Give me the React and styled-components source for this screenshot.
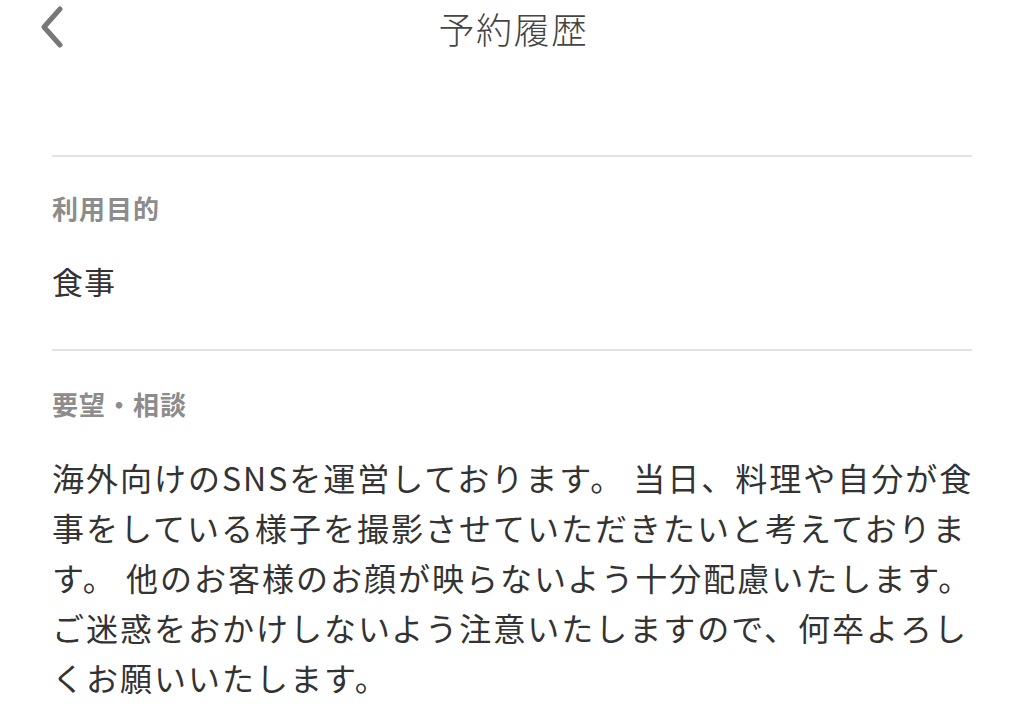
import React from "react";
import styled, { createGlobalStyle } from "styled-components";

const Global = createGlobalStyle`
  html, body { margin: 0; padding: 0; background: #fff; }
  body { font-family: "Noto Sans CJK JP", "Noto Sans", sans-serif; color: #333; }
`;

const Page = styled.div`
  width: 1024px;
  min-height: 721px;
  background: #fff;
  overflow: hidden;
`;

const Header = styled.header`
  position: relative;
  height: 56px;
  display: flex;
  align-items: center;
  justify-content: center;
`;

const BackButton = styled.button`
  position: absolute;
  left: 36px;
  top: 4px;
  width: 32px;
  height: 46px;
  padding: 0;
  border: 0;
  background: none;
  display: flex;
  align-items: center;
  justify-content: center;
`;

const Title = styled.h1`
  margin: 0;
  font-size: 36px;
  font-weight: 300;
  letter-spacing: 1.5px;
  line-height: 1;
  color: #444;
  padding-left: 3px;
`;

const List = styled.div`
  margin: 99px 52px 0;
`;

const Section = styled.section`
  border-top: 2px solid #e2e2e2;
  padding-top: ${(p) => p.$top}px;
  padding-bottom: ${(p) => p.$bottom}px;
`;

const Label = styled.div`
  font-size: 26px;
  font-weight: 700;
  letter-spacing: 1px;
  line-height: 26px;
  color: #8c8c8c;
`;

const Value = styled.div`
  margin-top: 44px;
  font-size: 31px;
  letter-spacing: 1px;
  line-height: 31px;
  color: #333;
`;

const Paragraph = styled.p`
  margin: 35px 0 0;
  font-size: 32px;
  letter-spacing: 2px;
  line-height: 50px;
  color: #333;
  white-space: nowrap;
`;

const Chevron = () => (
  <svg width="26" height="42" viewBox="0 0 26 42">
    <path
      d="M21 3 L5 21 L21 39"
      fill="none"
      stroke="#777"
      strokeWidth="5"
      strokeLinecap="round"
      strokeLinejoin="round"
    />
  </svg>
);

const lines = [
  "海外向けのSNSを運営しております。 当日、料理や自分が食",
  "事をしている様子を撮影させていただきたいと考えておりま",
  "す。 他のお客様のお顔が映らないよう十分配慮いたします。",
  "ご迷惑をおかけしないよう注意いたしますので、何卒よろし",
  "くお願いいたします。",
];

export default function App() {
  return (
    <Page>
      <Global />
      <Header>
        <BackButton aria-label="戻る">
          <Chevron />
        </BackButton>
        <Title>予約履歴</Title>
      </Header>
      <List>
        <Section $top={38} $bottom={53}>
          <Label>利用目的</Label>
          <Value>食事</Value>
        </Section>
        <Section $top={40} $bottom={20}>
          <Label>要望・相談</Label>
          <Paragraph>
            {lines.map((l, i) => (
              <React.Fragment key={i}>
                {l}
                {i < lines.length - 1 && <br />}
              </React.Fragment>
            ))}
          </Paragraph>
        </Section>
      </List>
    </Page>
  );
}
